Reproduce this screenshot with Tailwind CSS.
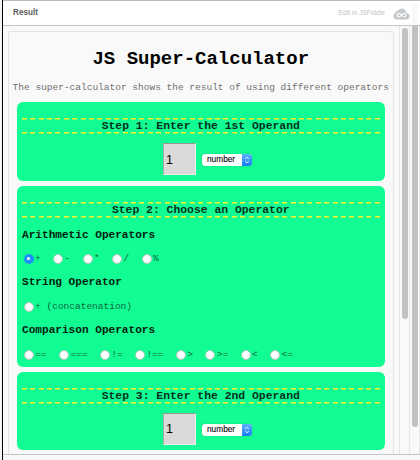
<!DOCTYPE html>
<html lang="en">
<head>
<meta charset="utf-8">
<title>JS Super-Calculator</title>
<script src="https://cdn.jsdelivr.net/npm/@tailwindcss/browser@4"></script>
</head>
<body class="w-[420px] h-[460px] overflow-hidden bg-[#f9f9f9] font-['Courier_New','Liberation_Mono',monospace] text-[9.5px]">
<div class="relative flex h-[460px] w-[420px]">
  <div class="w-[3px] shrink-0 border-r border-black bg-[#f4f4f4]"></div>
  <div class="flex w-[417px] flex-col">
    <header class="flex h-[26px] shrink-0 items-center justify-between border-t border-b border-t-[#b9bbbe] border-b-[#c3c5c8] bg-white pl-[10px] pr-[10px] font-['Liberation_Sans',sans-serif]">
      <span class="text-[8.2px] font-bold leading-none text-[#5c5c5c]">Result</span>
      <div class="flex items-center gap-[8px]">
        <span class="text-[6.7px] leading-none text-[#bfc1c4]">Edit in JSFiddle</span>
        <svg class="mt-[2px]" width="17" height="12" viewBox="0 0 17 12">
          <path d="M4 11.5C1.7 11.5.3 10 .3 8.200c0-1.300.8-2.400 1.900-2.900C2 3.700 3.200 2.700 4.600 3 5.500 1.200 7 .4 8.700.4c2.500 0 4.500 1.800 4.800 4.300 1.900.3 3.200 1.700 3.200 3.400 0 2-1.500 3.400-3.600 3.400z" fill="#c6c9cc"/>
          <path d="M8.500 7C7.500 5.900 6.800 5.200 5.900 5.200a1.800 1.800 0 0 0 0 3.600c1 0 1.700-.8 2.600-1.800s1.600-1.800 2.600-1.800a1.800 1.800 0 0 1 0 3.600C10.200 8.800 9.500 8.100 8.500 7z" fill="none" stroke="#fff" stroke-width="1.100"/>
        </svg>
      </div>
    </header>
    <div class="flex h-[428px] shrink-0">
      <main class="flex w-[396px] shrink-0 flex-col border-l border-white pl-[4px] pr-[5px] pt-[5px]">
        <div class="flex h-[423px] flex-col rounded-t-[3px] border border-b-0 border-[#e3e3e3] pl-[8px] pr-[8.5px]">
          <h1 class="mt-[14.5px] h-[24px] text-center text-[19px] font-bold leading-[24px] text-black">JS Super-Calculator</h1>
          <p class="-mx-[8px] mt-[10px] h-[14px] whitespace-nowrap text-center leading-[14px] text-[#707070]">The super-calculator shows the result of using different operators</p>

          <section class="mt-[7.500px] h-[78.500px] shrink-0 rounded-[6px] bg-[#11fc93] px-[5px] pt-[15.500px]">
            <div class="h-[16px] bg-[repeating-linear-gradient(90deg,#fff02a_0_5px,transparent_5px_8.400px),repeating-linear-gradient(90deg,#fff02a_0_5px,transparent_5px_8.400px)] bg-[length:100%_1.500px] bg-[position:top,bottom] bg-no-repeat">
              <h2 class="text-center text-[11.400px] font-bold leading-[16px] text-[#06301d]">Step 1: Enter the 1st Operand</h2>
            </div>
            <div class="mt-[9.500px] flex items-center pl-[141px]">
              <div class="flex h-[32px] w-[33px] items-center border border-t-[#8f9a95] border-l-[#a5ada9] border-r-[#eee] border-b-[#eee] bg-[#dadada] pl-[2px] pt-[2px] font-['Liberation_Sans',sans-serif] text-[12.500px] leading-none text-black">1</div>
              <div class="ml-[6px] mt-[2px] flex h-[12px] w-[50px] overflow-hidden rounded-[3px] bg-white font-['Liberation_Sans',sans-serif] shadow-[0_0_1px_#0007]">
                <span class="w-[39.500px] pl-[5px] text-[8.300px] leading-[11.500px] text-black [-webkit-text-stroke:0.1px_black]">number</span>
                <span class="flex w-[10.500px] items-center justify-center bg-linear-to-b from-[#5bb2fb] to-[#107cf7]"><svg width="6" height="8" viewBox="0 0 6 8" fill="none" stroke="#fff" stroke-width="0.9"><path d="M1.200 3 3 1.200 4.800 3M1.200 5 3 6.800 4.800 5"/></svg></span>
              </div>
            </div>
          </section>

          <section class="mt-[5.500px] h-[180.500px] shrink-0 rounded-[6px] bg-[#11fc93] px-[5px] pt-[15.500px]">
            <div class="h-[16px] bg-[repeating-linear-gradient(90deg,#fff02a_0_5px,transparent_5px_8.400px),repeating-linear-gradient(90deg,#fff02a_0_5px,transparent_5px_8.400px)] bg-[length:100%_1.500px] bg-[position:top,bottom] bg-no-repeat">
              <h2 class="text-center text-[11.400px] font-bold leading-[16px] text-[#06301d]">Step 2: Choose an Operator</h2>
            </div>
            <h3 class="mt-[9px] h-[16px] text-[11.100px] font-bold leading-[16px] text-[#03200f]">Arithmetic Operators</h3>
            <div class="mt-[10px] flex h-[12px] gap-[12.300px] pl-[1.600px] leading-[12px] text-[#09663f]">
              <span class="flex items-center gap-[1.500px]"><i class="flex size-[10px] items-center justify-center rounded-full bg-[#1e90fb]"><i class="size-[3px] rounded-full bg-white"></i></i>+</span>
              <span class="flex items-center gap-[1.500px]"><i class="size-[10px] rounded-full border border-[#a7c9b8] bg-white"></i>-</span>
              <span class="flex items-center gap-[1.500px]"><i class="size-[10px] rounded-full border border-[#a7c9b8] bg-white"></i>*</span>
              <span class="flex items-center gap-[1.500px]"><i class="size-[10px] rounded-full border border-[#a7c9b8] bg-white"></i>/</span>
              <span class="flex items-center gap-[1.500px]"><i class="size-[10px] rounded-full border border-[#a7c9b8] bg-white"></i>%</span>
            </div>
            <h3 class="mt-[9.500px] h-[16px] text-[11.100px] font-bold leading-[16px] text-[#03200f]">String Operator</h3>
            <div class="mt-[10.500px] flex h-[12px] pl-[1.600px] leading-[12px] text-[#09663f]">
              <span class="flex items-center gap-[1.500px]"><i class="size-[10px] rounded-full border border-[#a7c9b8] bg-white"></i>+ (concatenation)</span>
            </div>
            <h3 class="mt-[9.500px] h-[16px] text-[11.100px] font-bold leading-[16px] text-[#03200f]">Comparison Operators</h3>
            <div class="mt-[10.500px] flex h-[12px] gap-[12.300px] pl-[1.600px] leading-[12px] text-[#09663f]">
              <span class="flex items-center gap-[1.500px]"><i class="size-[10px] rounded-full border border-[#a7c9b8] bg-white"></i>==</span>
              <span class="flex items-center gap-[1.500px]"><i class="size-[10px] rounded-full border border-[#a7c9b8] bg-white"></i>===</span>
              <span class="flex items-center gap-[1.500px]"><i class="size-[10px] rounded-full border border-[#a7c9b8] bg-white"></i>!=</span>
              <span class="flex items-center gap-[1.500px]"><i class="size-[10px] rounded-full border border-[#a7c9b8] bg-white"></i>!==</span>
              <span class="flex items-center gap-[1.500px]"><i class="size-[10px] rounded-full border border-[#a7c9b8] bg-white"></i>&gt;</span>
              <span class="flex items-center gap-[1.500px]"><i class="size-[10px] rounded-full border border-[#a7c9b8] bg-white"></i>&gt;=</span>
              <span class="flex items-center gap-[1.500px]"><i class="size-[10px] rounded-full border border-[#a7c9b8] bg-white"></i>&lt;</span>
              <span class="flex items-center gap-[1.500px]"><i class="size-[10px] rounded-full border border-[#a7c9b8] bg-white"></i>&lt;=</span>
            </div>
          </section>

          <section class="mt-[5.500px] h-[78px] shrink-0 rounded-[6px] bg-[#11fc93] px-[5px] pt-[15.500px]">
            <div class="h-[16px] bg-[repeating-linear-gradient(90deg,#fff02a_0_5px,transparent_5px_8.400px),repeating-linear-gradient(90deg,#fff02a_0_5px,transparent_5px_8.400px)] bg-[length:100%_1.500px] bg-[position:top,bottom] bg-no-repeat">
              <h2 class="text-center text-[11.400px] font-bold leading-[16px] text-[#06301d]">Step 3: Enter the 2nd Operand</h2>
            </div>
            <div class="mt-[9px] flex items-center pl-[141px]">
              <div class="flex h-[32px] w-[33px] items-center border border-t-[#8f9a95] border-l-[#a5ada9] border-r-[#eee] border-b-[#eee] bg-[#dadada] pl-[2px] pt-[2px] font-['Liberation_Sans',sans-serif] text-[12.500px] leading-none text-black">1</div>
              <div class="ml-[6px] mt-[2px] flex h-[12px] w-[50px] overflow-hidden rounded-[3px] bg-white font-['Liberation_Sans',sans-serif] shadow-[0_0_1px_#0007]">
                <span class="w-[39.500px] pl-[5px] text-[8.300px] leading-[11.500px] text-black [-webkit-text-stroke:0.1px_black]">number</span>
                <span class="flex w-[10.500px] items-center justify-center bg-linear-to-b from-[#5bb2fb] to-[#107cf7]"><svg width="6" height="8" viewBox="0 0 6 8" fill="none" stroke="#fff" stroke-width="0.9"><path d="M1.200 3 3 1.200 4.800 3M1.200 5 3 6.800 4.800 5"/></svg></span>
              </div>
            </div>
          </section>
        </div>
      </main>
      <div class="flex w-[11px] shrink-0 justify-center border-x border-[#e6e6e6] pt-[2px]"><div class="h-[291px] w-[6px] rounded-full bg-[#c1c1c1]"></div></div>
      <div class="flex w-[10px] shrink-0 justify-center border-r border-[#e6e6e6]"><div class="h-[401px] w-[6px] rounded-b-full bg-[#c1c1c1]"></div></div>
    </div>
    <footer class="h-[6px] border-t border-[#c3c5c8]"></footer>
  </div>
  <div class="absolute left-[412px] top-[3px] h-[22px] w-[6px] rounded-t-full bg-[#f9f9f9]"></div>
</div>
</body>
</html>
